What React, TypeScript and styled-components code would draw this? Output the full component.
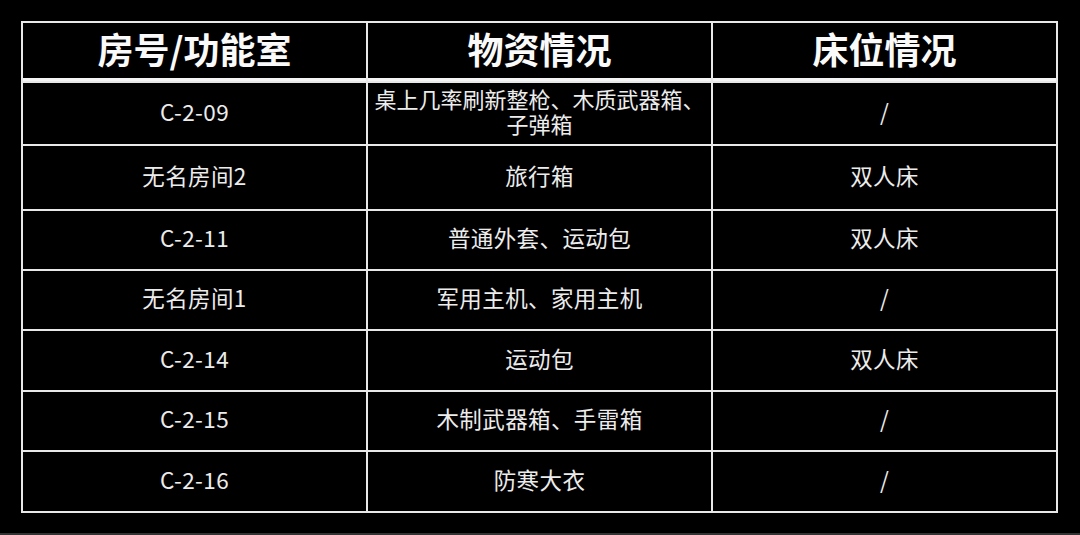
import React from "react";
import styled, { createGlobalStyle } from "styled-components";

const GlobalStyle = createGlobalStyle`
  html, body {
    margin: 0;
    padding: 0;
    background: #000;
  }
  body {
    font-family: "Noto Sans CJK SC", "Noto Sans", sans-serif;
  }
`;

const Page = styled.div`
  box-sizing: border-box;
  width: 1080px;
  height: 535px;
  background: #000;
  padding: 21px 0 0 21px;
  border-bottom: 2px solid #333;
`;

const Grid = styled.div`
  box-sizing: border-box;
  width: 1037px;
  display: grid;
  grid-template-columns: repeat(3, 1fr);
  grid-template-rows: 58px 61px 63px 58px 58px 59px 58px 59px;
  gap: 2px;
  padding: 2px;
  background: #e8e8e8;
`;

const HeadCell = styled.div`
  background: #000;
  border-bottom: 3px solid #f4f4f4;
  display: flex;
  align-items: center;
  justify-content: center;
  color: #fafafa;
  font-size: 36px;
  font-weight: 700;
  line-height: 1;
  padding-bottom: 5px;
`;

const Cell = styled.div<{ $dense?: boolean }>`
  background: #000;
  display: flex;
  align-items: center;
  justify-content: center;
  text-align: center;
  color: #ececec;
  font-size: ${(p) => (p.$dense ? "22px" : "22.5px")};
  letter-spacing: ${(p) => (p.$dense ? "0" : "0.4px")};
  line-height: 25px;
  white-space: pre-line;
  padding-bottom: 5px;
`;

const headers = ["房号/功能室", "物资情况", "床位情况"];

const rows: [string, string, string][] = [
  ["C-2-09", "桌上几率刷新整枪、木质武器箱、\n子弹箱", "/"],
  ["无名房间2", "旅行箱", "双人床"],
  ["C-2-11", "普通外套、运动包", "双人床"],
  ["无名房间1", "军用主机、家用主机", "/"],
  ["C-2-14", "运动包", "双人床"],
  ["C-2-15", "木制武器箱、手雷箱", "/"],
  ["C-2-16", "防寒大衣", "/"],
];

export default function App() {
  return (
    <>
      <GlobalStyle />
      <Page>
        <Grid>
          {headers.map((h) => (
            <HeadCell key={h}>{h}</HeadCell>
          ))}
          {rows.map((r, i) =>
            r.map((c, j) => (
              <Cell key={`${i}-${j}`} $dense={c.includes("\n")}>
                {c}
              </Cell>
            ))
          )}
        </Grid>
      </Page>
    </>
  );
}
